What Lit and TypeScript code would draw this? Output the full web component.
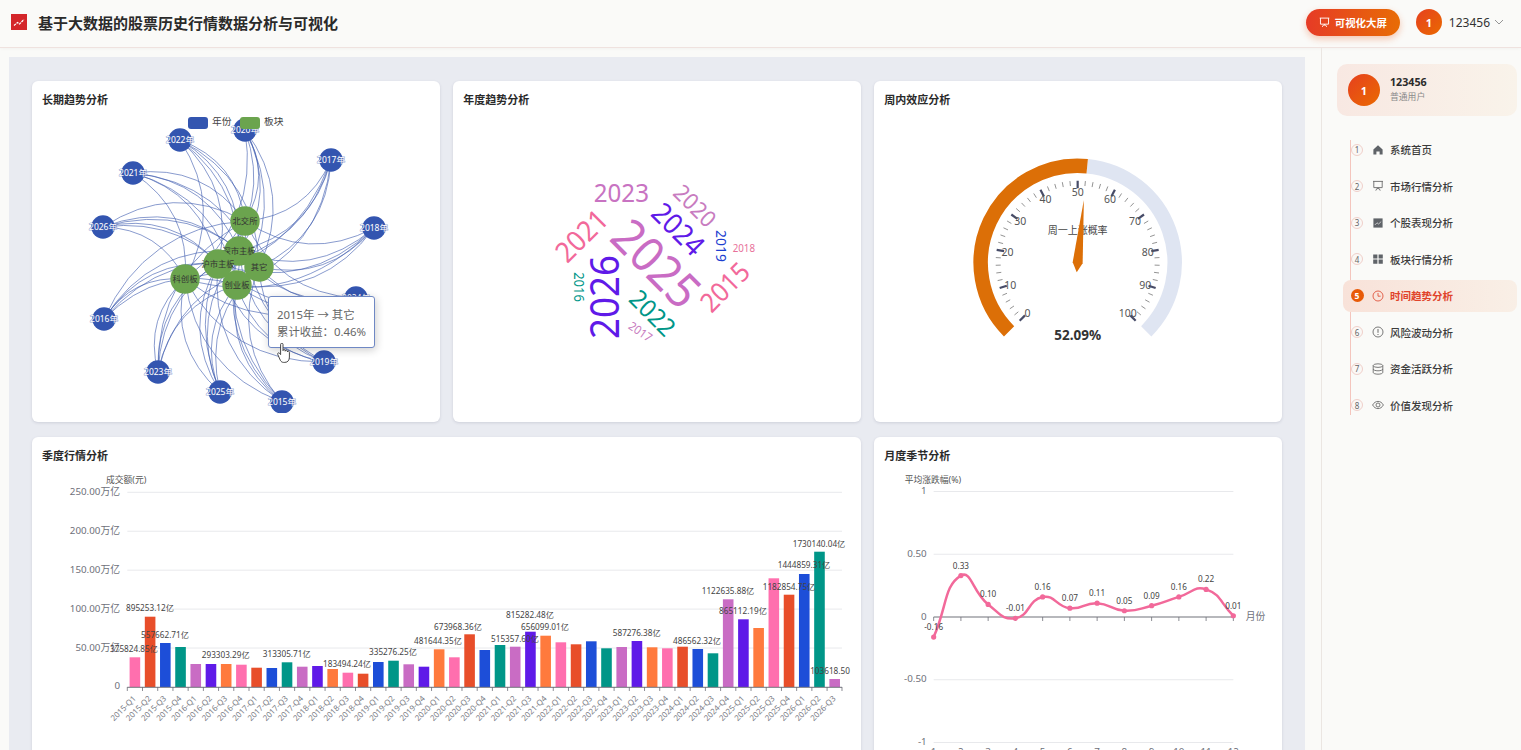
import { LitElement, html, css, svg, unsafeCSS } from "lit";
import { customElement } from "lit/decorators.js";

const FONT = unsafeCSS('"Noto Sans","Noto Sans CJK SC",sans-serif');

const years: [string, number, number][] = [
  ["2022年", 180, 140], ["2020年", 245, 130], ["2017年", 331, 160], ["2021年", 133, 173],
  ["2018年", 374, 228], ["2026年", 103, 227], ["2016年", 104, 319], ["2024年", 356, 298],
  ["2023年", 158, 372], ["2025年", 220, 392], ["2015年", 282, 402], ["2019年", 324, 362],
];
const sectors: [string, number, number][] = [
  ["北交所", 245, 221], ["深市主板", 239, 251], ["创业板", 237, 285],
  ["沪市主板", 218, 264], ["其它", 259, 267], ["科创板", 185, 279],
];

const cloud: [string, number, number, number, number, string][] = [
  ["2025", 656.5, 263.5, 48, 45, "#c96cc4"], ["2026", 605, 297, 39.5, -90, "#5f1ae8"],
  ["2023", 621.5, 193, 26, 0, "#c873c2"], ["2021", 581.7, 235.7, 28.5, -45, "#f2699a"],
  ["2024", 678.3, 229, 28.5, 45, "#5f1ae8"], ["2020", 695, 205.7, 23, 45, "#c87cc0"],
  ["2022", 652.7, 313, 25, 45, "#009688"], ["2015", 725, 287, 26.8, -45, "#f2699a"],
  ["2019", 722, 246, 15, 90, "#1d3fd0"], ["2016", 579, 287, 14, 90, "#009688"],
  ["2018", 744, 248, 10.5, 0, "#e8709a"], ["2017", 640.7, 331.7, 12, 35, "#c87cc0"],
];

const BAR_COLORS = ["#ff6fae", "#e84e2a", "#1d4ed8", "#009688", "#c96cc4", "#5f1ae8", "#ff7a3d"];
const barTops = [
  657.3, 616.7, 643, 647, 664, 664, 664, 664.7, 667.7, 668, 662.3, 666.7, 666, 669, 672.7, 673.7, 662, 660.7, 664.3, 666.7, 649.3, 657.3, 634.3,
  650, 645, 646.7, 631.7, 635.7, 642.3, 644.3, 641.3, 648.3, 647, 641, 647.3, 648.3, 646.7, 649, 653.3, 599.3, 619.3, 628, 578.3, 594.7, 574, 551.7, 679,
];
const barLabels: [string, number, number][] = [
  ["375824.85亿", 134, 649], ["895253.12亿", 150, 608], ["557662.71亿", 165, 635], ["293303.29亿", 225.7, 655],
  ["313305.71亿", 286.7, 654], ["183494.24亿", 347, 664], ["335276.25亿", 393, 652], ["481644.35亿", 438, 641],
  ["673968.36亿", 458, 627], ["815282.48亿", 530, 615], ["656099.01亿", 545, 627], ["515357.60亿", 515, 639],
  ["587276.38亿", 636.7, 633], ["486562.32亿", 697, 641], ["1122635.88亿", 728, 591], ["865112.19亿", 743, 611],
  ["1182854.75亿", 789, 587], ["1444859.31亿", 804, 565], ["1730140.04亿", 819, 544], ["103618.50", 830, 671],
];
const quarters: string[] = [];
for (let y = 2015; y <= 2026; y++) for (let q = 1; q <= 4; q++) if (quarters.length < 47) quarters.push(`${y}-Q${q}`);

const months = [-0.16, 0.33, 0.1, -0.01, 0.16, 0.07, 0.11, 0.05, 0.09, 0.16, 0.22, 0.01];
const mx = (i: number) => 934 + i * 27.245;
const my = (v: number) => 617 - v * 125.5;

function smoothPath(pts: [number, number][]) {
  const s = 0.5;
  const cps: [number, number, number, number][] = pts.map((p, i) => {
    const a = pts[Math.max(i - 1, 0)], b = pts[Math.min(i + 1, pts.length - 1)];
    const l1 = Math.hypot(p[0] - a[0], p[1] - a[1]), l2 = Math.hypot(b[0] - p[0], b[1] - p[1]);
    const t = l1 + l2 || 1;
    const vx = (b[0] - a[0]) * s, vy = (b[1] - a[1]) * s;
    return [p[0] - (vx * l1) / t, p[1] - (vy * l1) / t, p[0] + (vx * l2) / t, p[1] + (vy * l2) / t];
  });
  let d = `M${pts[0][0]} ${pts[0][1]}`;
  for (let i = 1; i < pts.length; i++) {
    d += `C${cps[i - 1][2]} ${cps[i - 1][3]} ${cps[i][0]} ${cps[i][1]} ${pts[i][0]} ${pts[i][1]}`;
  }
  return d;
}

const polar = (r: number, deg: number, cx = 1078, cy = 262.7): [number, number] => {
  const a = (deg * Math.PI) / 180;
  return [cx + r * Math.cos(a), cy - r * Math.sin(a)];
};
const arcD = (r: number, from: number, to: number) => {
  const [x1, y1] = polar(r, from), [x2, y2] = polar(r, to);
  return `M${x1} ${y1}A${r} ${r} 0 ${from - to > 180 ? 1 : 0} 1 ${x2} ${y2}`;
};

const menuIcons = [
  svg`<path d="M6 1.200 1.400 5.400v5h3V7.400h3.200v3h3v-5z" fill="#5f6368"/>`,
  svg`<path d="M1 1.400h10M1.800 1.400v6.200h8.400V1.400M6 7.600v1M3.800 10.600l1-2h2.400l1 2" fill="none" stroke="#6b6b6b" stroke-width=".9"/>`,
  svg`<path d="M1.400 1.400h9.200v9.200H1.400z" fill="#5f6368"/><path d="M2.800 8 5 5.800l1.600 1.200 2.600-2.400" fill="none" stroke="#ddd" stroke-width=".8"/>`,
  svg`<path d="M1.200 1.400h4.200v4.200H1.200zM6.600 1.400h4.200v4.200H6.600zM1.200 6.600h4.200v4.200H1.200zM6.600 6.600h4.200v4.200H6.600z" fill="#5f6368"/>`,
  svg`<circle cx="6" cy="6" r="5" fill="none" stroke="#e0543c" stroke-width=".9"/><path d="M6 3v3.200h2.600" fill="none" stroke="#e0543c" stroke-width=".9"/>`,
  svg`<circle cx="6" cy="6" r="5" fill="none" stroke="#6b6b6b" stroke-width=".9"/><path d="M6 3v3.800M6 8v1" fill="none" stroke="#6b6b6b" stroke-width="1"/>`,
  svg`<ellipse cx="6" cy="2.600" rx="4.800" ry="1.800" fill="none" stroke="#6b6b6b" stroke-width=".9"/><path d="M1.200 2.600v6.800c0 1 2.100 1.800 4.800 1.800s4.800-.8 4.800-1.800V2.600M1.200 6c0 1 2.100 1.800 4.800 1.800S10.800 7 10.800 6" fill="none" stroke="#6b6b6b" stroke-width=".9"/>`,
  svg`<path d="M.6 6C2 3.600 3.800 2.400 6 2.400S10 3.600 11.400 6C10 8.400 8.200 9.600 6 9.600S2 8.400.6 6z" fill="none" stroke="#6b6b6b" stroke-width=".9"/><circle cx="6" cy="6" r="2" fill="none" stroke="#6b6b6b" stroke-width=".9"/>`,
];
const menu = ["系统首页", "市场行情分析", "个股表现分析", "板块行情分析", "时间趋势分析", "风险波动分析", "资金活跃分析", "价值发现分析"];

@customElement("app-root")
export class AppRoot extends LitElement {
  static styles = css`
    :host { display: block; height: 100vh; overflow: hidden; background: #fafaf8; font-family: ${FONT}; color: #2b2b2b; }
    .header { box-sizing: content-box; padding: 0 17px 3px 11px; height: 44px; border-bottom: 1px solid #efe2df; display: flex; align-items: center; background: #fafaf8; box-shadow: 0 1px 3px rgba(0,0,0,.03); }
    .logo { width: 16px; height: 16px; display: block; margin-right: 11px; }
    .title { font-size: 15px; font-weight: 700; color: #2a2a2a; flex: 1; white-space: nowrap; }
    .btn { width: 94px; height: 27px; border-radius: 14px; background: linear-gradient(90deg,#e63b26,#e86c05); color: #fff; font-size: 10.4px; font-weight: 700; display: flex; align-items: center; justify-content: center; gap: 5px; box-shadow: 0 3px 7px rgba(232,90,30,.32); margin-right: 16px; }
    .avatar { width: 26px; height: 26px; border-radius: 50%; background: linear-gradient(135deg,#e6401f,#ea6a00); color: #fff; display: flex; align-items: center; justify-content: center; font-weight: 700; font-size: 11px; flex: none; }
    .uname { font-size: 12px; margin: 0 4px 0 7px; color: #333; }
    .body { display: flex; height: 702px; }
    .main { flex: 1; min-width: 0; padding: 9px 16px 0 9px; overflow: hidden; }
    .panel { background: #e9ebf1; padding: 24px 23px; height: 800px; box-sizing: border-box; display: grid; grid-template-columns: 1fr 1fr 1fr; grid-template-rows: 341px 341px; gap: 15px 13.5px; }
    .card { position: relative; background: #fff; border-radius: 6px; box-shadow: 0 1px 3px rgba(60,70,100,.16); overflow: hidden; min-width: 0; }
    .wide { grid-column: span 2; }
    .card h3 { margin: 0; font-size: 11px; font-weight: 700; line-height: 15px; padding: 11px 10px 10px; color: #2a2a2a; }
    .card svg.chart { display: block; width: 100%; height: 306px; }
    .tooltip { position: absolute; left: 236px; top: 215px; width: 107px; height: 52px; box-sizing: border-box; background: #fff; border: 1px solid #6f88c4; border-radius: 3px; box-shadow: 1px 2px 8px rgba(0,0,0,.2); padding: 9px 8px; font-size: 11.400px; line-height: 17px; color: #666; white-space: nowrap; }
    .hand { position: absolute; left: 245px; top: 262px; width: 14px; height: 21px; }
    .side { width: 200px; flex: none; border-left: 1px solid #ebe6e2; padding: 16px 4px 0 15px; box-sizing: border-box; }
    .ucard { height: 52px; border-radius: 10px; background: linear-gradient(90deg,#f8e8e2,#f9f3ea); display: flex; align-items: center; padding-left: 11px; gap: 10px; }
    .ucard .avatar { width: 32px; height: 32px; }
    .uinfo b { display: block; font-size: 10.700px; line-height: 15px; color: #2b2b2b; }
    .uinfo span { display: block; font-size: 8.800px; line-height: 15px; color: #8a8a8a; }
    .menu { position: relative; margin: 17.500px 0 0 6px; }
    .menu::before { content: ""; position: absolute; left: 7px; top: 6px; bottom: 6px; width: 1.200px; background: #f4c5bd; }
    .item { position: relative; height: 32px; margin-bottom: 4.500px; border-radius: 8px; display: flex; align-items: center; font-size: 10.500px; font-weight: 500; color: #3c3c3c; }
    .item.on { background: linear-gradient(90deg,#f8e2d9,#f9efe6); color: #e0432a; font-weight: 700; }
    .num { width: 12px; height: 12px; box-sizing: border-box; border: 1.400px solid #f0d0ca; border-radius: 50%; background: #faf8f6; margin-left: 8px; font-size: 8px; font-weight: 400; color: #666; display: flex; align-items: center; justify-content: center; position: relative; flex: none; }
    .on .num { width: 13px; height: 13px; margin-left: 7.500px; margin-right: -.5px; border: 0; background: #e85a08; color: #fff; font-weight: 700; font-size: 8.500px; }
    .ico { width: 12px; height: 12px; margin: 0 6px 0 9px; display: block; flex: none; }
    svg text { font-family: ${FONT}; }
    .lbl { font-size: 8.200px; fill: #444; text-anchor: middle; dominant-baseline: central; }
    .tick { font-size: 9.800px; fill: #6e7079; text-anchor: end; dominant-baseline: central; }
    .qt { font-size: 8px; fill: #7a7c85; text-anchor: end; }
    .yname { font-size: 8.800px; fill: #555; }
    .ylab { font-size: 8.500px; fill: #fff; stroke: rgba(70,100,180,.55); stroke-width: 1.200px; paint-order: stroke; text-anchor: middle; dominant-baseline: central; }
    .slab { font-size: 8.300px; fill: #333; text-anchor: middle; dominant-baseline: central; }
    .leg { font-size: 9.800px; fill: #444; dominant-baseline: central; }
    .word { text-anchor: middle; }
    .gt { font-size: 10.500px; fill: #555; text-anchor: middle; dominant-baseline: central; }
    .gtitle { font-size: 10px; fill: #464646; text-anchor: middle; dominant-baseline: central; }
    .gval { font-size: 13.500px; font-weight: 700; fill: #333; text-anchor: middle; dominant-baseline: central; }
  `;

  graph() {
    const edges = years.flatMap((y) =>
      sectors.map((s) => {
        const dx = s[1] - y[1], dy = s[2] - y[2];
        const cx = (y[1] + s[1]) / 2 + dy * 0.3, cy = (y[2] + s[2]) / 2 - dx * 0.3;
        return svg`<path d="M${y[1]} ${y[2]}Q${cx} ${cy} ${s[1]} ${s[2]}" fill="none" stroke="#3f5db0" stroke-opacity=".62" stroke-width="1"/>`;
      })
    );
    return html`<svg class="chart" viewBox="32 117 407.670 306">
      <defs><clipPath id="gc"><rect x="32" y="117" width="408" height="296"/></clipPath></defs>
      <g clip-path="url(#gc)">
        ${edges}
        ${years.map((y) => svg`<circle cx=${y[1]} cy=${y[2]} r="11.700" fill="#3355b0"/><text class="ylab" x=${y[1]} y=${y[2]}>${y[0]}</text>`)}
        ${sectors.map((s) => svg`<circle cx=${s[1]} cy=${s[2]} r="14.700" fill="#6ba44e"/><text class="slab" x=${s[1]} y=${s[2]}>${s[0]}</text>`)}
      </g>
      <rect x="188" y="117" width="20" height="12" rx="3" fill="#3355b0"/><text class="leg" x="212" y="122">年份</text>
      <rect x="240" y="117" width="20" height="12" rx="3" fill="#6ba44e"/><text class="leg" x="264" y="122">板块</text>
    </svg>`;
  }

  wordCloud() {
    return html`<svg class="chart" viewBox="453.170 117 407.670 306">
      ${cloud.map((w) => svg`<text class="word" dy=".357em" transform="translate(${w[1]} ${w[2]}) rotate(${w[4]}) scale(.93 1)" font-size=${w[3]} fill=${w[5]}>${w[0]}</text>`)}
    </svg>`;
  }

  gauge() {
    const START = 225, SPAN = 270, v = 52.09;
    const split = START - (SPAN * v) / 100;
    const ticks = [];
    for (let i = 0; i <= 50; i++) {
      const a = START - (SPAN * i) / 50;
      if (i % 5 === 0) {
        const [x1, y1] = polar(74.5, a), [x2, y2] = polar(82, a);
        const [tx, ty] = polar(71, a);
        ticks.push(svg`<line x1=${x1} y1=${y1} x2=${x2} y2=${y2} stroke="#474c68" stroke-width="2.200"/><text class="gt" x=${tx} y=${ty}>${i * 2}</text>`);
      } else {
        const [x1, y1] = polar(77, a), [x2, y2] = polar(82, a);
        ticks.push(svg`<line x1=${x1} y1=${y1} x2=${x2} y2=${y2} stroke="#777" stroke-width=".8"/>`);
      }
    }
    const tip = polar(63, split), tail = polar(-9.6, split), l = polar(5, split + 90), r = polar(5, split - 90);
    return html`<svg class="chart" viewBox="874.330 117 407.670 306">
      <path d=${arcD(97, split, -45)} fill="none" stroke="#dfe5f2" stroke-width="14.500"/>
      <path d=${arcD(97, 225, split)} fill="none" stroke="#dc6f07" stroke-width="14.500"/>
      ${ticks}
      <text class="gtitle" x="1078" y="230">周一上涨概率</text>
      <polygon points="${tip} ${r} ${tail} ${l}" fill="#dc6f07"/>
      <text class="gval" x="1078" y="335">52.09%</text>
    </svg>`;
  }

  bars() {
    const step = 715 / 47;
    return html`<svg class="chart" viewBox="32 473 828.830 306">
      ${[250, 200, 150, 100, 50].map((v) => {
        const y = 687 - v * 0.7788;
        return svg`<line x1="127.300" x2="842" y1=${y} y2=${y} stroke="#e8e9ec"/><text class="tick" x="120" y=${y - 1}>${v}.00万亿</text>`;
      })}
      <text class="tick" x="120" y="686">0</text>
      <text class="yname" x="106" y="483">成交额(元)</text>
      ${barTops.map((t, i) => svg`<rect x=${127.3 + i * step + 2.3} y=${t} width="10.600" height=${687 - t} fill=${BAR_COLORS[i % 7]}/>`)}
      <line x1="127.300" x2="842" y1="687.300" y2="687.300" stroke="#6e7079"/>
      ${quarters.map((_, i) => svg`<line x1=${127.3 + i * step} x2=${127.3 + i * step} y1="687" y2="691" stroke="#6e7079" stroke-width=".8"/>`)}
      <line x1="842" x2="842" y1="687" y2="691" stroke="#6e7079" stroke-width=".8"/>
      ${quarters.map((q, i) => svg`<text class="qt" transform="translate(${127.3 + (i + 0.5) * step + 1.5} 699) rotate(-45)">${q}</text>`)}
      ${barLabels.map((l) => svg`<text class="lbl" x=${l[1]} y=${l[2]}>${l[0]}</text>`)}
    </svg>`;
  }

  line() {
    const pts = months.map((v, i) => [mx(i), my(v)] as [number, number]);
    return html`<svg class="chart" viewBox="874.330 473 407.670 306">
      ${[1, 0.5, -0.5, -1].map((v) => svg`<line x1="934" x2="1233.700" y1=${my(v)} y2=${my(v)} stroke="#e8e9ec"/>`)}
      ${["1", "0.50", "0", "-0.50", "-1"].map((t, i) => svg`<text class="tick" x="927" y=${491 + i * 62.6}>${t}</text>`)}
      <text class="yname" x="905" y="483">平均涨跌幅(%)</text>
      <line x1="934" x2="1233.700" y1="617" y2="617" stroke="#6e7079"/>
      ${months.map((_, i) => svg`<line x1=${mx(i)} x2=${mx(i)} y1="617" y2="621" stroke="#6e7079" stroke-width=".8"/><text class="tick" style="text-anchor:middle" x=${mx(i)} y="752">${i + 1}</text>`)}
      <text class="tick" style="text-anchor:start" x="1246" y="616.500">月份</text>
      <path d=${smoothPath(pts)} fill="none" stroke="#f2699a" stroke-width="2.500"/>
      ${pts.map((p) => svg`<circle cx=${p[0]} cy=${p[1]} r="2.600" fill="#f2699a"/>`)}
      ${months.map((v, i) => svg`<text class="lbl" x=${mx(i)} y=${my(v) - 10.5}>${v.toFixed(2)}</text>`)}
    </svg>`;
  }

  render() {
    return html`
      <div class="header">
        <svg class="logo" viewBox="0 0 16 16"><rect width="16" height="16" fill="#d4262a"/><path d="M3 11.500 6.500 8.500 8.500 10 13 5.500" fill="none" stroke="#fff" stroke-width="1.200" stroke-dasharray="2.500 .8"/></svg>
        <div class="title">基于大数据的股票历史行情数据分析与可视化</div>
        <div class="btn">
          <svg width="11" height="11" viewBox="0 0 12 12"><path d="M.8 1.200h10.400M1.600 1.200v6.600h8.800V1.200M6 7.800v1M3.600 10.800l1.200-2h2.400l1.200 2" fill="none" stroke="#fff" stroke-width="1"/></svg>
          可视化大屏
        </div>
        <div class="avatar">1</div>
        <div class="uname">123456</div>
        <svg width="10" height="6" viewBox="0 0 10 6"><path d="M1 1l4 4 4-4" fill="none" stroke="#8a8a8a" stroke-width=".9"/></svg>
      </div>
      <div class="body">
        <div class="main">
          <div class="panel">
            <div class="card"><h3>长期趋势分析</h3>${this.graph()}
              <div class="tooltip">2015年 → 其它<br />累计收益：0.46%</div>
              <svg class="hand" viewBox="0 0 14 21"><path d="M3.600 1.400c0-1.600 2.400-1.600 2.400 0v6.200c0-1.400 2.200-1.400 2.200 0v.6c0-1.400 2.200-1.400 2.200.2v.6c0-1.200 2-1.200 2 .4v4.600c0 3-1.400 5.400-4.600 5.400H6.600c-1.600 0-2.400-.8-3.200-2L.8 11.600c-.8-1.200.8-2.400 1.800-1.200l1 1.200z" fill="#fff" stroke="#333" stroke-width=".9"/></svg>
            </div>
            <div class="card"><h3>年度趋势分析</h3>${this.wordCloud()}</div>
            <div class="card"><h3>周内效应分析</h3>${this.gauge()}</div>
            <div class="card wide"><h3>季度行情分析</h3>${this.bars()}</div>
            <div class="card"><h3>月度季节分析</h3>${this.line()}</div>
          </div>
        </div>
        <div class="side">
          <div class="ucard">
            <div class="avatar">1</div>
            <div class="uinfo"><b>123456</b><span>普通用户</span></div>
          </div>
          <div class="menu">
            ${menu.map((m, i) => html`<div class="item ${i === 4 ? "on" : ""}">
              <span class="num">${i + 1}</span>
              <svg class="ico" viewBox="0 0 12 12">${menuIcons[i]}</svg>
              <span>${m}</span>
            </div>`)}
          </div>
        </div>
      </div>
    `;
  }
}
